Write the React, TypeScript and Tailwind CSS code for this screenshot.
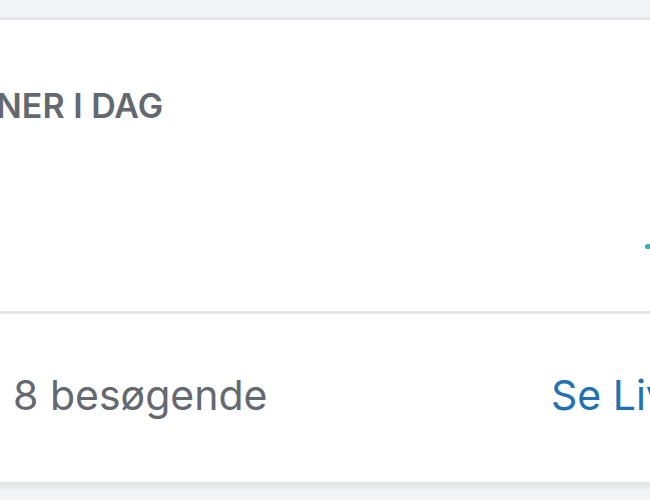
export default function App() {
  return (
    <div
      className="w-[650px] h-[500px] bg-[#f3f4f6] overflow-hidden flex flex-col"
      style={{ fontFamily: 'Inter, "Liberation Sans", Arial, sans-serif' }}
    >
      <div className="h-[17px] shrink-0" />
      <div className="h-[468px] shrink-0 bg-white border-y-[3px] border-[#e3e5e8] flex flex-col">
        <div className="h-[291px] shrink-0 flex flex-col">
          <div className="pt-[69px] -ml-[4px] whitespace-nowrap text-[34px] font-semibold leading-none text-[#646970]">
            NER I DAG
          </div>
          <div className="flex justify-end pt-[121px]">
            <div className="w-[6px] h-[5px] rounded-full bg-[#2fb3b8] -mr-[1px]" />
          </div>
        </div>
        <div className="h-[3px] shrink-0 bg-[#e3e5e8]" />
        <div className="flex-1 flex items-start pt-[61px] pl-[13px] overflow-hidden whitespace-nowrap">
          <span className="text-[41px] leading-none text-[#646970]">8 besøgende</span>
          <span className="ml-auto -mr-[42px] text-[41px] leading-none text-[#2271b1]">Se Live</span>
        </div>
      </div>
      <div className="flex-1 bg-gradient-to-b from-[#e6e7ea] to-[#f3f4f6] via-[#f3f4f6]" />
    </div>
  );
}
